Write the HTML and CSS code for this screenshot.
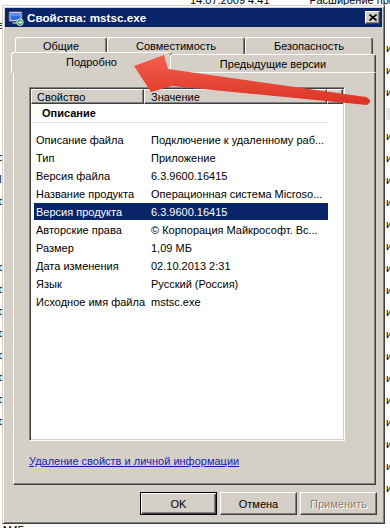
FILE: index.html
```html
<!DOCTYPE html>
<html lang="ru">
<head>
    <meta charset="UTF-8">
    <meta name="viewport" content="width=device-width, initial-scale=1.0">
    <title>Свойства: mstsc.exe</title>
    <link rel="stylesheet" href="styles.css">
</head>
<body>
    <!-- explorer window behind the dialog -->
    <div class="explorer">
        <div class="ex-head">
            <span class="ex-date">14.07.2009 4:41</span>
            <span class="ex-type">Расширение приложения</span>
        </div>
        <div class="ex-left">
            <div>е</div><div></div><div></div><div>|</div><div></div><div>|</div><div>d</div><div>ll</div>
            <div>c</div><div>l</div><div></div><div>c</div><div>c</div><div>c</div><div>c</div><div>c</div>
            <div>c</div><div>c</div><div>c</div><div></div><div></div><div></div>
        </div>
        <div class="ex-right">
            <div>и</div><div>и</div><div>и</div><div class="ex-sel"></div><div>и</div><div>и</div><div>и</div>
            <div>и</div><div>и</div><div>и</div><div>и</div><div>и</div><div>и</div><div>и</div><div>и</div>
            <div>и</div><div>и</div><div>и</div><div>и</div><div>и</div><div>и</div>
        </div>
        <div class="ex-foot">АМБ</div>
    </div>

    <div class="dialog">
        <div class="titlebar">
            <svg class="app-icon" viewBox="0 0 16 16">
                <rect x="1" y="1.5" width="13" height="10" rx="1" fill="#c9ced8" stroke="#4a5264"/>
                <rect x="2.5" y="3" width="10" height="7" fill="#2d6be0"/>
                <rect x="2.5" y="3" width="10" height="3" fill="#5b8ff0"/>
                <rect x="4.5" y="12" width="6" height="2" fill="#8a909c"/>
                <circle cx="12" cy="12.3" r="3.3" fill="#3aa84a" stroke="#e8f4e8" stroke-width=".8"/>
                <path d="M10.2 12.3h3.4M12.3 10.9l1.4 1.4-1.4 1.4" fill="none" stroke="#fff" stroke-width="1"/>
            </svg>
            <span class="title">Свойства: mstsc.exe</span>
            <button class="close">
                <svg viewBox="0 0 8 7" width="8" height="7"><path d="M0.5 0.5L7.5 6.5M7.5 0.5L0.5 6.5" stroke="#000" stroke-width="1.6"/></svg>
            </button>
        </div>

        <div class="body">
            <div class="tabs">
                <div class="tab-row back">
                    <div class="tab tab-general">Общие</div>
                    <div class="tab tab-compat">Совместимость</div>
                    <div class="tab tab-security">Безопасность</div>
                </div>
                <div class="tab-row front">
                    <div class="tab tab-details selected">Подробно</div>
                    <div class="tab tab-prev">Предыдущие версии</div>
                </div>
            </div>

            <div class="panel">
                <div class="listview">
                    <div class="lv-header">
                        <div class="lv-col lv-name">Свойство</div>
                        <div class="lv-col lv-value">Значение</div>
                        <div class="lv-col lv-rest"></div>
                    </div>
                    <div class="lv-group">Описание</div>
                    <div class="lv-row"><span class="key">Описание файла</span><span class="val">Подключение к удаленному раб...</span></div>
                    <div class="lv-row"><span class="key">Тип</span><span class="val">Приложение</span></div>
                    <div class="lv-row"><span class="key">Версия файла</span><span class="val">6.3.9600.16415</span></div>
                    <div class="lv-row"><span class="key">Название продукта</span><span class="val">Операционная система Microso...</span></div>
                    <div class="lv-row selected"><span class="key">Версия продукта</span><span class="val">6.3.9600.16415</span></div>
                    <div class="lv-row"><span class="key">Авторские права</span><span class="val">© Корпорация Майкрософт. Вс...</span></div>
                    <div class="lv-row"><span class="key">Размер</span><span class="val">1,09 МБ</span></div>
                    <div class="lv-row"><span class="key">Дата изменения</span><span class="val">02.10.2013 2:31</span></div>
                    <div class="lv-row"><span class="key">Язык</span><span class="val">Русский (Россия)</span></div>
                    <div class="lv-row"><span class="key">Исходное имя файла</span><span class="val">mstsc.exe</span></div>
                </div>
                <a class="remove-link" href="#">Удаление свойств и личной информации</a>
            </div>

            <div class="buttons">
                <button class="btn default">OK</button>
                <button class="btn">Отмена</button>
                <button class="btn" disabled>Применить</button>
            </div>
        </div>
    </div>

    <!-- red annotation arrow drawn over the dialog -->
    <svg class="arrow" viewBox="0 0 390 528">
        <defs>
            <linearGradient id="arrowFill" x1="0" y1="0" x2="0" y2="1">
                <stop offset="0" stop-color="#f4604c"/>
                <stop offset="1" stop-color="#dc3326"/>
            </linearGradient>
        </defs>
        <path d="M134 66 L164 55 L168 69 L366 97 Q374 101 367 105 L172 86 L151 92 Z" fill="url(#arrowFill)"/>
    </svg>
</body>
</html>
```

FILE: styles.css
```css
body {
    margin: 0;
    width: 390px;
    height: 528px;
    overflow: hidden;
    position: relative;
    background: #fff;
    font-family: "Liberation Sans", Arial, sans-serif;
    font-size: 11px;
    color: #000;
}

/* explorer behind */
.explorer {
    position: absolute;
    inset: 0;
    display: grid;
    grid-template-columns: 4px 1fr 5px;
    grid-template-rows: 6px 1fr 4px;
    white-space: nowrap;
}
.ex-head {
    grid-column: 1 / -1;
    grid-row: 1;
    margin-top: -6px;
    height: 12px;
    line-height: 12px;
    padding-left: 190px;
    display: flex;
    gap: 40px;
}
.ex-left {
    grid-column: 1;
    grid-row: 2;
    overflow: hidden;
    direction: rtl;
    padding-top: 8px;
    line-height: 22px;
}
.ex-left div,
.ex-right div {
    height: 22px;
}
.ex-right {
    grid-column: 3;
    grid-row: 2;
    overflow: hidden;
    padding-top: 31px;
    padding-left: 1px;
    line-height: 22px;
}
.ex-right .ex-sel {
    background: #e4e4e4;
    margin: 5px 0;
    height: 12px;
}
.ex-foot {
    grid-column: 1 / -1;
    grid-row: 3;
    line-height: 12px;
    padding-left: 1px;
}

/* dialog window */
.dialog {
    position: absolute;
    left: 2px;
    top: 5px;
    width: 383px;
    height: 519px;
    box-sizing: border-box;
    padding: 2px;
    background: #d4d0c8;
    border: 1px solid;
    border-color: #d4d0c8 #404040 #404040 #d4d0c8;
    box-shadow: inset 1px 1px #fff, inset -1px -1px #808080;
    display: flex;
    flex-direction: column;
}
.titlebar {
    height: 19px;
    background: #0a246a;
    display: flex;
    align-items: center;
    padding: 0 2px 0 3px;
    color: #fff;
}
.app-icon {
    width: 16px;
    height: 16px;
    margin-right: 3px;
}
.title {
    flex: 1;
    font-weight: bold;
    font-size: 11.7px;
}
.close {
    width: 15px;
    height: 13px;
    box-sizing: border-box;
    padding: 0;
    background: #d4d0c8;
    border: 1px solid;
    border-color: #fff #404040 #404040 #fff;
    box-shadow: inset -1px -1px #808080;
    display: flex;
    align-items: center;
    justify-content: center;
}

.body {
    flex: 1;
    padding: 10px 6px 0 8px;
    display: flex;
    flex-direction: column;
}

/* tabs */
.tabs {
    position: relative;
    z-index: 2;
}
.tab-row {
    display: flex;
}
.tab-row.back {
    height: 17px;
    margin: 0 3px 0 2px;
}
.tab-row.front {
    height: 18px;
}
.tab {
    box-sizing: border-box;
    background: #d4d0c8;
    border: 1px solid;
    border-bottom: none;
    border-color: #fff #404040 transparent #fff;
    box-shadow: inset -1px 0 #808080;
    border-radius: 3px 3px 0 0;
    display: flex;
    align-items: center;
    justify-content: center;
    white-space: nowrap;
}
.tab-general {
    width: 92px;
}
.tab-compat {
    width: 138px;
}
.tab-security {
    flex: 1;
}
.tab-details {
    width: 161px;
}
.tab-prev {
    flex: 1;
}
.tab.selected {
    margin: -2px -2px -1px -2px;
    padding-bottom: 2px;
}

/* tab page */
.panel {
    position: relative;
    z-index: 1;
    height: 413px;
    box-sizing: border-box;
    border: 1px solid;
    border-color: #fff #404040 #404040 #fff;
    box-shadow: inset -1px -1px #808080;
    padding: 14px 0 0 15px;
}
.listview {
    width: 316px;
    height: 354px;
    box-sizing: border-box;
    background: #fff;
    border: 1px solid;
    border-color: #808080 #fff #fff #808080;
    box-shadow: inset 1px 1px #404040, inset -1px -1px #d4d0c8;
    padding: 1px;
    overflow: hidden;
}
.lv-header {
    display: flex;
    height: 15px;
}
.lv-col {
    box-sizing: border-box;
    background: #d4d0c8;
    border: 1px solid;
    border-color: #fff #404040 #404040 #fff;
    box-shadow: inset -1px -1px #808080;
    padding-left: 5px;
    display: flex;
    align-items: center;
}
.lv-name {
    width: 113px;
}
.lv-value {
    width: 183px;
    padding-left: 6px;
}
.lv-rest {
    flex: 1;
}
.lv-group {
    height: 18px;
    margin: 0 15px 8px 0;
    border-bottom: 1px solid #e2e2e2;
    padding-left: 11px;
    display: flex;
    align-items: center;
    font-weight: bold;
}
.lv-row {
    display: flex;
    align-items: center;
    width: 294px;
    height: 17px;
    margin: 0 0 1px 3px;
}
.lv-row .key {
    width: 115px;
    box-sizing: border-box;
    padding-left: 2px;
    white-space: nowrap;
}
.lv-row .val {
    flex: 1;
    padding-left: 2px;
    white-space: nowrap;
    overflow: hidden;
}
.lv-row.selected {
    background: #0a246a;
    color: #fff;
}
.remove-link {
    display: inline-block;
    margin-top: 14px;
    line-height: 13px;
    color: #1c1ca8;
    text-decoration: underline;
}

/* buttons */
.buttons {
    display: flex;
    justify-content: flex-end;
    gap: 3px;
    padding-top: 7px;
    margin-right: -1px;
}
.btn {
    width: 77px;
    height: 23px;
    box-sizing: border-box;
    padding: 0;
    font: inherit;
    color: #000;
    background: #d4d0c8;
    border: 1px solid;
    border-color: #fff #404040 #404040 #fff;
    box-shadow: inset -1px -1px #808080;
}
.btn.default {
    border-color: #000;
    box-shadow: inset 1px 1px #fff, inset -1px -1px #404040, inset -2px -2px #808080;
}
.btn:disabled {
    color: #808080;
    text-shadow: 1px 1px #fff;
}

.arrow {
    position: absolute;
    left: 0;
    top: 0;
    width: 390px;
    height: 528px;
    z-index: 5;
    pointer-events: none;
}
```
